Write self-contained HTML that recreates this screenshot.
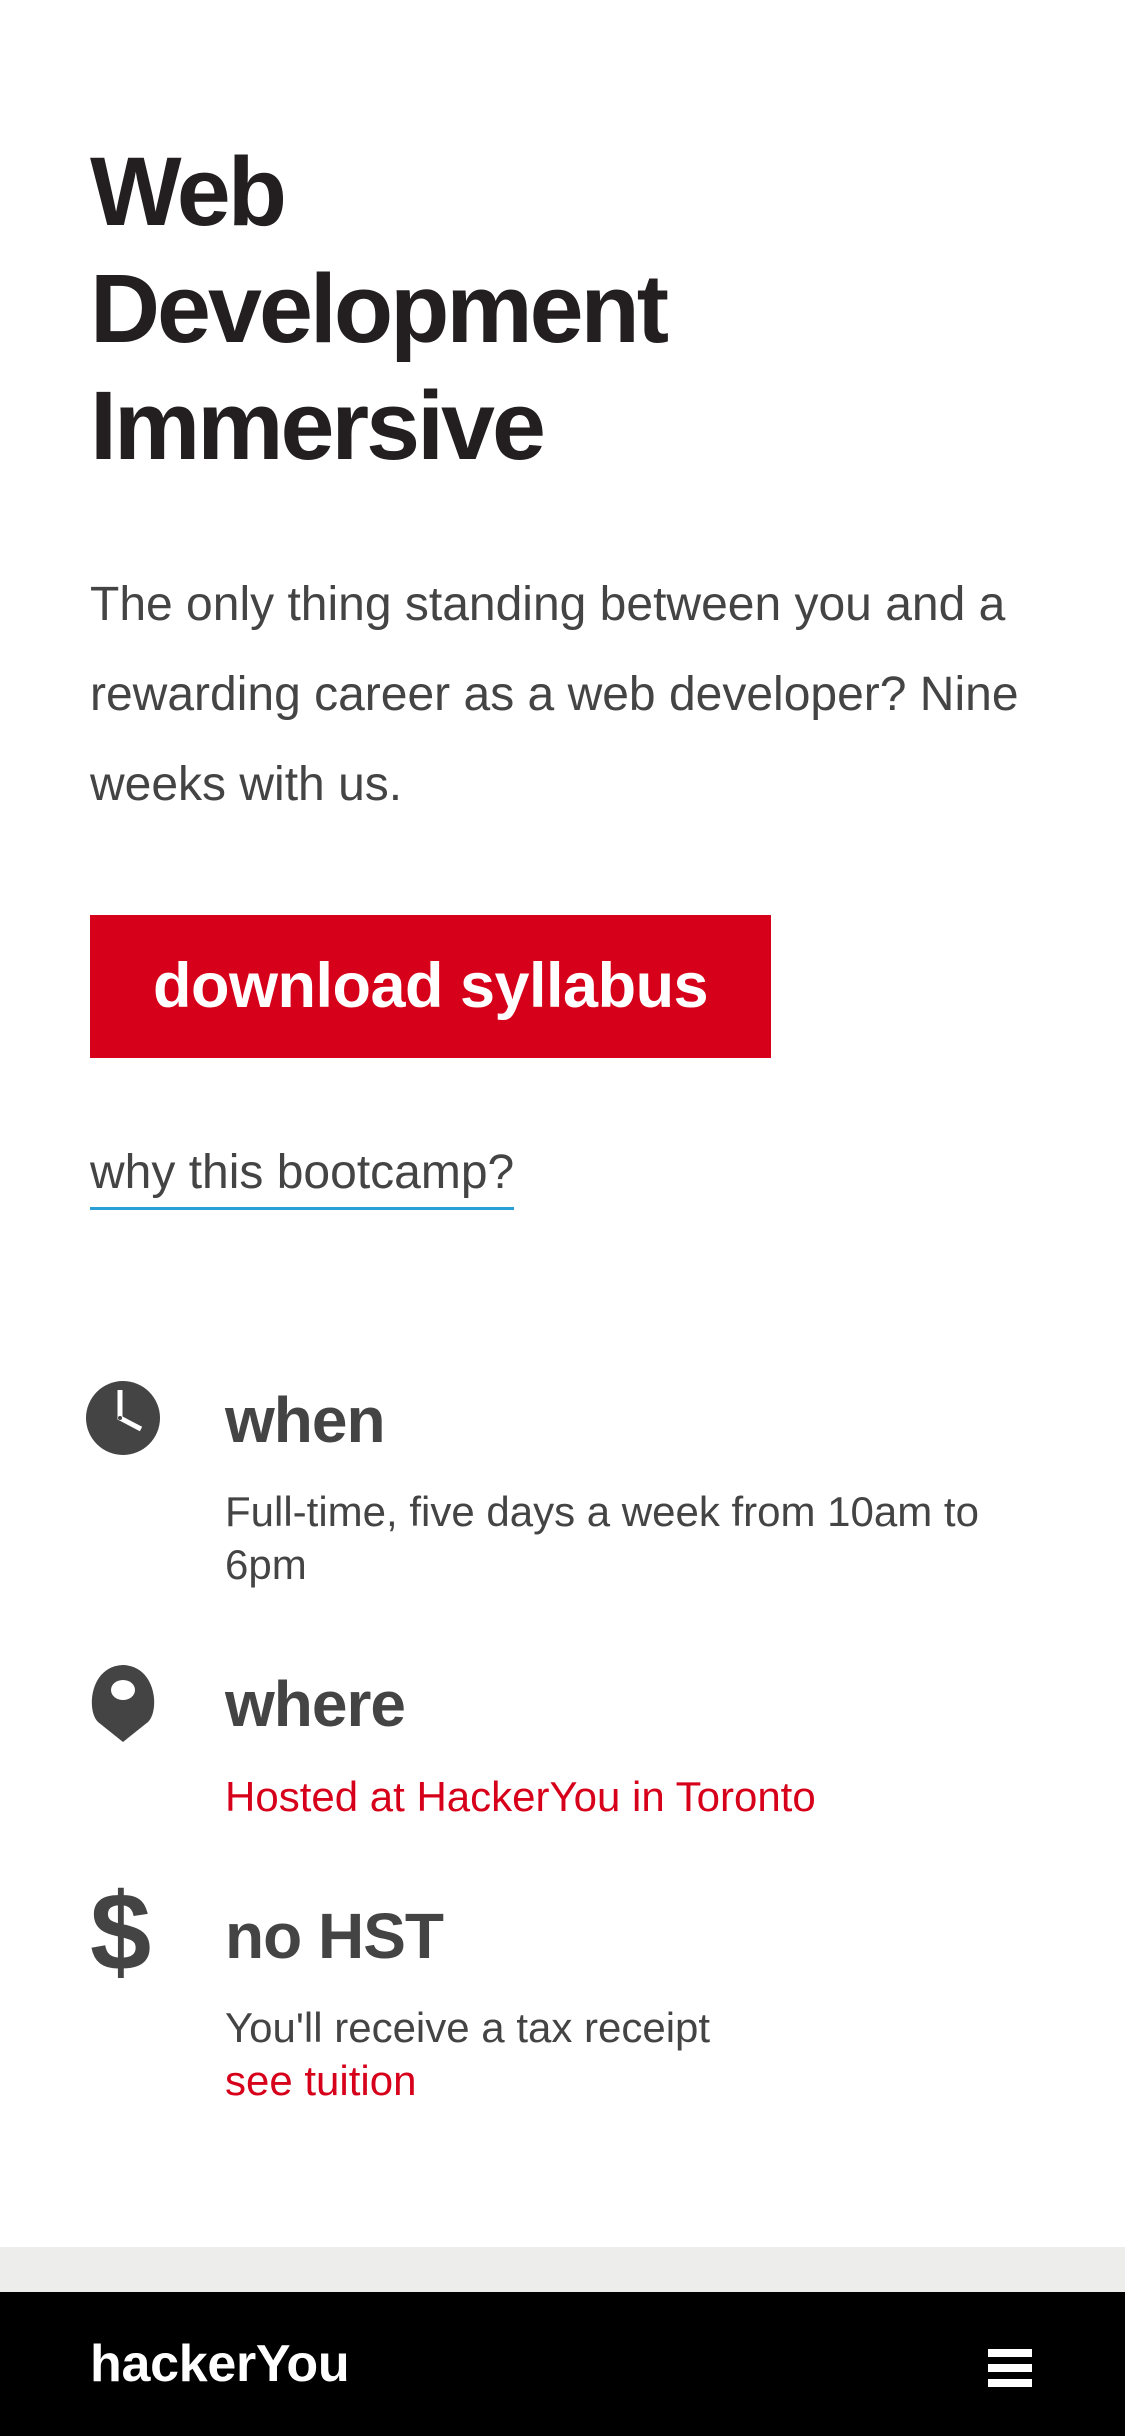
<!DOCTYPE html>
<html><head><meta charset="utf-8"><style>
*{margin:0;padding:0;box-sizing:border-box}
html,body{width:1125px;height:2436px;background:#fff;overflow:hidden;font-family:"Liberation Sans",Arial,sans-serif;position:relative}
.a{position:absolute;white-space:nowrap}
h1{position:absolute;left:90px;top:133px;font-size:97px;line-height:117px;font-weight:bold;color:#231f20;letter-spacing:-3px}
.p{position:absolute;left:90px;top:560px;width:1000px;font-size:48px;line-height:90px;color:#444;white-space:normal}
.btn{position:absolute;left:90px;top:915px;width:681px;height:143px;background:#d7001a;color:#fff;font-weight:bold;font-size:63px;line-height:143px;padding-left:63px;letter-spacing:-0.5px}
.lnk{left:90px;top:1149px;font-size:48px;line-height:48px;color:#444;padding-bottom:10px;border-bottom:3px solid #2a9fd6}
.h{left:225px;font-size:64px;line-height:64px;font-weight:bold;color:#444;letter-spacing:-1px}
.d{left:225px;font-size:42px;line-height:53px;color:#444}
.r{color:#d7001a}
</style></head><body>
<h1>Web<br>Development<br>Immersive</h1>
<div class="p">The only thing standing between you and a<br>rewarding career as a web developer? Nine<br>weeks with us.</div>
<div class="btn">download syllabus</div>
<div class="a lnk">why this bootcamp?</div>

<svg class="a" style="left:85px;top:1380px" width="76" height="76" viewBox="0 0 76 76">
<circle cx="38" cy="38" r="37" fill="#444"/>
<path d="M35 10 L35 38 L56 49" stroke="#fff" stroke-width="5" fill="none"/>
<circle cx="35" cy="38" r="2" fill="#444"/>
</svg>
<div class="a h" style="top:1388px">when</div>
<div class="a d" style="top:1485px">Full-time, five days a week from 10am to<br>6pm</div>

<svg class="a" style="left:90px;top:1664px" width="66" height="78" viewBox="0 0 66 78">
<path d="M33 78 L8 58 C-4 46 0 2 33 1 C66 2 70 46 58 58 Z" fill="#444"/>
<ellipse cx="33" cy="26" rx="12" ry="10" fill="#fff"/>
</svg>
<div class="a h" style="top:1672px">where</div>
<div class="a d r" style="top:1770px">Hosted at HackerYou in Toronto</div>

<div class="a" style="left:90px;top:1878px;font-size:110px;line-height:110px;font-weight:bold;color:#444">$</div>
<div class="a h" style="top:1904px">no HST</div>
<div class="a d" style="top:2001px">You'll receive a tax receipt<br><span class="r">see tuition</span></div>

<div class="a" style="left:0;top:2247px;width:1125px;height:45px;background:#ededeb"></div>
<div class="a" style="left:0;top:2292px;width:1125px;height:144px;background:#000"></div>
<div class="a" style="left:90px;top:2338px;font-size:52px;line-height:52px;font-weight:bold;color:#fff;letter-spacing:-0.3px">hackerYou</div>
<div class="a" style="left:988px;top:2349px;width:44px;height:8px;background:#fff"></div>
<div class="a" style="left:988px;top:2364px;width:44px;height:8px;background:#fff"></div>
<div class="a" style="left:988px;top:2379px;width:44px;height:8px;background:#fff"></div>
</body></html>
